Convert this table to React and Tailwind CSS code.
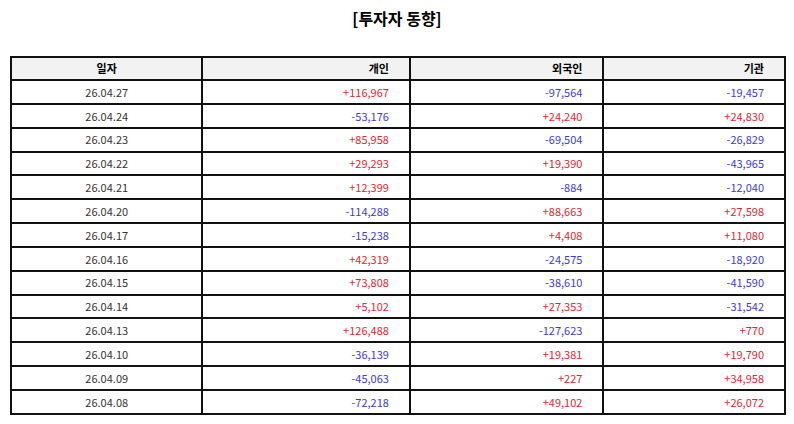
const rows = [
  ['26.04.27', '+116,967', '-97,564', '-19,457'],
  ['26.04.24', '-53,176', '+24,240', '+24,830'],
  ['26.04.23', '+85,958', '-69,504', '-26,829'],
  ['26.04.22', '+29,293', '+19,390', '-43,965'],
  ['26.04.21', '+12,399', '-884', '-12,040'],
  ['26.04.20', '-114,288', '+88,663', '+27,598'],
  ['26.04.17', '-15,238', '+4,408', '+11,080'],
  ['26.04.16', '+42,319', '-24,575', '-18,920'],
  ['26.04.15', '+73,808', '-38,610', '-41,590'],
  ['26.04.14', '+5,102', '+27,353', '-31,542'],
  ['26.04.13', '+126,488', '-127,623', '+770'],
  ['26.04.10', '-36,139', '+19,381', '+19,790'],
  ['26.04.09', '-45,063', '+227', '+34,958'],
  ['26.04.08', '-72,218', '+49,102', '+26,072']
]

function Num({ value }) {
  const up = value.startsWith('+')
  return (
    <td className={`border-2 border-[#111] pr-[20px] text-right ${up ? 'text-[#e3262e]' : 'text-[#3b3bd1]'}`}>
      {value}
    </td>
  )
}

export default function App() {
  return (
    <div className="min-h-[424px] bg-white px-[10px] pt-[8px] text-[#333] [font-family:'Noto_Sans_CJK_KR','Noto_Sans',sans-serif]">
      <h1 className="text-center text-[16px] font-bold leading-[20px] text-black">[투자자 동향]</h1>
      <table className="mt-[28px] w-[776px] border-collapse text-[11px]">
        <colgroup>
          <col className="w-[192px]" />
          <col className="w-[208px]" />
          <col className="w-[194px]" />
          <col className="w-[182px]" />
        </colgroup>
        <thead>
          <tr className="h-[23px] bg-[#f2f2f2] font-bold text-black">
            <th className="border-2 border-[#111] text-center">일자</th>
            <th className="border-2 border-[#111] pr-[20px] text-right">개인</th>
            <th className="border-2 border-[#111] pr-[20px] text-right">외국인</th>
            <th className="border-2 border-[#111] pr-[20px] text-right">기관</th>
          </tr>
        </thead>
        <tbody>
          {rows.map(([date, indiv, foreign, inst]) => (
            <tr key={date} className="h-[23.85px]">
              <td className="border-2 border-[#111] text-center">{date}</td>
              <Num value={indiv} />
              <Num value={foreign} />
              <Num value={inst} />
            </tr>
          ))}
        </tbody>
      </table>
    </div>
  )
}
